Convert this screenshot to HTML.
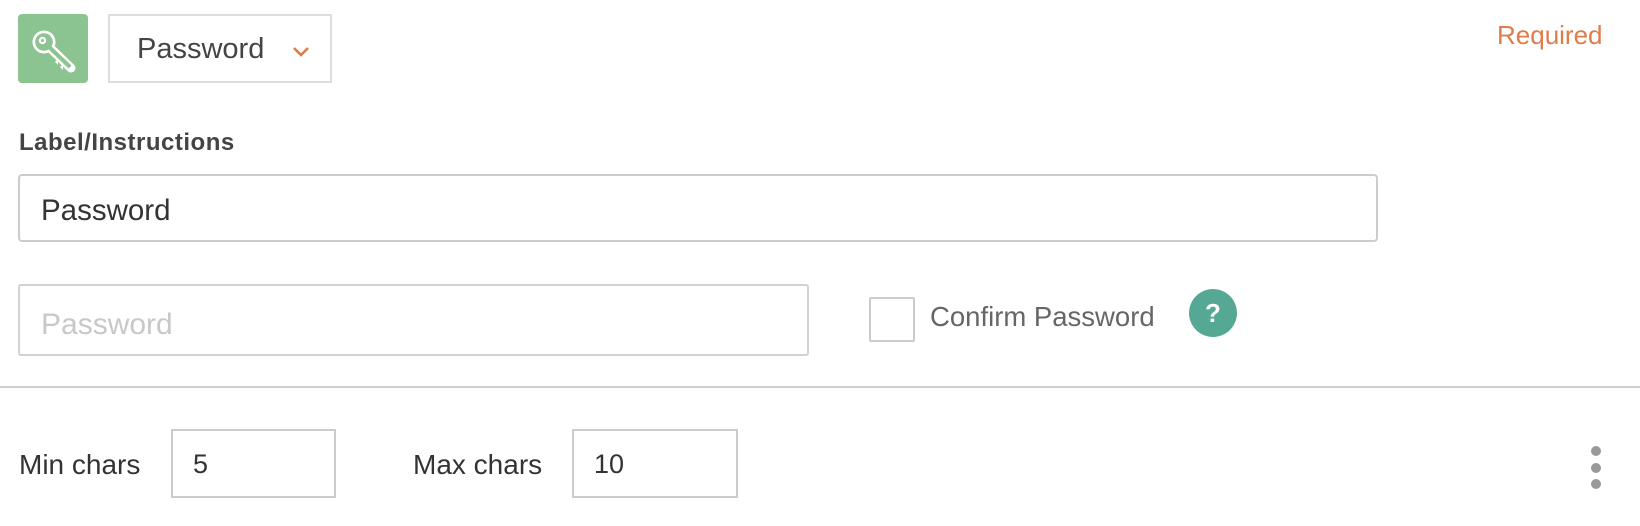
<!DOCTYPE html>
<html><head><meta charset="utf-8"><style>
body{margin:0;width:1640px;height:526px;background:#fff;position:relative;overflow:hidden;font-family:"Liberation Sans",sans-serif;color:#444}
.a{position:absolute}
.box{position:absolute;border:2px solid #d6d6d6;box-sizing:border-box;background:#fff}
.t{position:absolute;white-space:nowrap;line-height:1}
</style></head><body>
<div class="a" style="left:18px;top:14px;width:70px;height:69px;background:#8cc491;border-radius:4px">
<svg width="70" height="69" viewBox="0 0 70 69">
<g stroke="#fff" fill="#fff"><line x1="28" y1="30" x2="53" y2="54" stroke-width="9" stroke-linecap="round"/><circle cx="26" cy="28" r="11.5" stroke="none"/>
<path d="M40 45 L37 48 L40 51 Z" stroke="none"/><path d="M45 50 L42 53 L45 56 Z" stroke="none"/></g>
<g stroke="#8cc491" fill="#8cc491"><line x1="28" y1="30" x2="52" y2="53" stroke-width="4" stroke-linecap="butt"/><circle cx="26" cy="28" r="8.8" stroke="none"/></g>
<circle cx="24.5" cy="26.5" r="2.6" fill="none" stroke="#fff" stroke-width="2.2"/>
</svg>
</div>
<div class="box" style="left:108px;top:14px;width:224px;height:69px;border-color:#ddd"></div>
<div class="t" style="left:137px;top:35px;font-size:29px;color:#444">Password</div>
<svg class="a" style="left:292px;top:46px" width="18" height="12"><path d="M2 2 L9 9 L16 2" fill="none" stroke="#e07b4a" stroke-width="2.6"/></svg>
<div class="t" style="left:1497px;top:22px;font-size:26px;color:#e07b4a">Required</div>
<div class="t" style="left:19px;top:131px;font-size:24px;font-weight:bold;letter-spacing:0.5px;color:#444">Label/Instructions</div>
<div class="box" style="left:18px;top:174px;width:1360px;height:68px;border-radius:4px;border-color:#ccc"></div>
<div class="t" style="left:41px;top:196px;font-size:29.5px;color:#333">Password</div>
<div class="box" style="left:18px;top:284px;width:791px;height:72px;border-radius:3px;border-color:#d2d2d2"></div>
<div class="t" style="left:41px;top:310px;font-size:30px;color:#c8c8c8">Password</div>
<div class="box" style="left:869px;top:297px;width:46px;height:45px;border-radius:2px;border-color:#ccc"></div>
<div class="t" style="left:930px;top:303px;font-size:27.5px;color:#666">Confirm Password</div>
<div class="a" style="left:1189px;top:289px;width:48px;height:48px;border-radius:50%;background:#55a994;color:#fff;font-size:26px;font-weight:bold;text-align:center;line-height:48px">?</div>
<div class="a" style="left:0;top:386px;width:1640px;height:2px;background:#cfcfcf"></div>
<div class="t" style="left:19px;top:451px;font-size:28px;color:#333">Min chars</div>
<div class="box" style="left:171px;top:429px;width:165px;height:69px;border-color:#ccc"></div>
<div class="t" style="left:193px;top:451px;font-size:27px;color:#333">5</div>
<div class="t" style="left:413px;top:451px;font-size:28px;color:#333">Max chars</div>
<div class="box" style="left:572px;top:429px;width:166px;height:69px;border-color:#ccc"></div>
<div class="t" style="left:594px;top:451px;font-size:27px;color:#333">10</div>
<div class="a" style="left:1591px;top:446px;width:10px;height:10px;border-radius:50%;background:#999"></div>
<div class="a" style="left:1591px;top:463px;width:10px;height:10px;border-radius:50%;background:#999"></div>
<div class="a" style="left:1591px;top:479px;width:10px;height:10px;border-radius:50%;background:#999"></div>
</body></html>
